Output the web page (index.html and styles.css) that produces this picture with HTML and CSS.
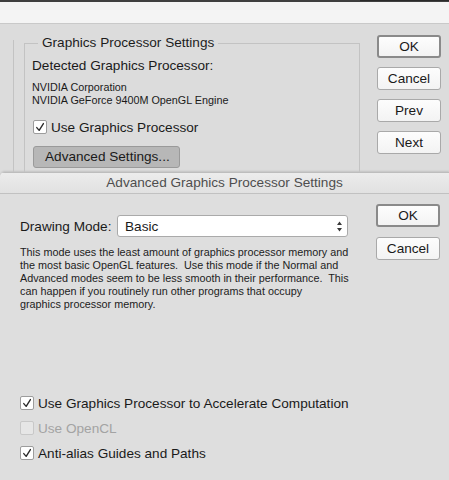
FILE: index.html
```html
<!DOCTYPE html>
<html>
<head>
<meta charset="utf-8">
<link rel="stylesheet" href="styles.css">
</head>
<body>
<div class="topbar">
  <div class="topbar-dark"><div class="topbar-dark-right"></div></div>
  <div class="topbar-light"></div>
</div>
<div class="main">
  <div class="sidebar"></div>
  <fieldset class="group">
    <legend>Graphics Processor Settings</legend>
    <div class="detected">Detected Graphics Processor:</div>
    <div class="gpu-info">NVIDIA Corporation<br>NVIDIA GeForce 9400M OpenGL Engine</div>
    <div class="check-row gp-check">
      <span class="checkbox checked"><svg viewBox="0 0 13 13" width="13" height="13"><path d="M3 6.6 L5.6 9.6 L10.2 2.2" fill="none" stroke="#2b2b2b" stroke-width="1.5" stroke-linecap="round" stroke-linejoin="round"/></svg></span>
      <span class="check-label">Use Graphics Processor</span>
    </div>
    <div class="adv-btn">Advanced Settings...</div>
  </fieldset>
  <div class="buttons main-buttons">
    <div class="btn btn-default">OK</div>
    <div class="btn">Cancel</div>
    <div class="btn">Prev</div>
    <div class="btn">Next</div>
  </div>
</div>
<div class="sheet">
  <div class="sheet-title">Advanced Graphics Processor Settings</div>
  <div class="sheet-body">
    <div class="sheet-main">
      <div class="mode-row">
        <span class="mode-label">Drawing Mode:</span>
        <div class="select">
          <span>Basic</span>
          <svg class="select-arrows" viewBox="0 0 7 11" width="7" height="11"><path d="M3.5 0.5 L6 4 L1 4 Z M1 7 L6 7 L3.5 10.5 Z" fill="#3a3a3a"/></svg>
        </div>
      </div>
      <p class="desc">This mode uses the least amount of graphics processor memory and<br>the most basic OpenGL features.&nbsp; Use this mode if the Normal and<br>Advanced modes seem to be less smooth in their performance.&nbsp; This<br>can happen if you routinely run other programs that occupy<br>graphics processor memory.</p>
      <div class="checks">
        <div class="check-row">
          <span class="checkbox checked"><svg viewBox="0 0 13 13" width="13" height="13"><path d="M3 6.6 L5.6 9.6 L10.2 2.2" fill="none" stroke="#2b2b2b" stroke-width="1.5" stroke-linecap="round" stroke-linejoin="round"/></svg></span>
          <span class="check-label">Use Graphics Processor to Accelerate Computation</span>
        </div>
        <div class="check-row disabled">
          <span class="checkbox"></span>
          <span class="check-label">Use OpenCL</span>
        </div>
        <div class="check-row">
          <span class="checkbox checked"><svg viewBox="0 0 13 13" width="13" height="13"><path d="M3 6.6 L5.6 9.6 L10.2 2.2" fill="none" stroke="#2b2b2b" stroke-width="1.5" stroke-linecap="round" stroke-linejoin="round"/></svg></span>
          <span class="check-label">Anti-alias Guides and Paths</span>
        </div>
      </div>
    </div>
    <div class="buttons sheet-buttons">
      <div class="btn btn-default">OK</div>
      <div class="btn">Cancel</div>
    </div>
  </div>
</div>
</body>
</html>
```

FILE: styles.css
```css
* { box-sizing: border-box; }
html, body {
  margin: 0;
  padding: 0;
  width: 449px;
  height: 480px;
  overflow: hidden;
  background: #dddddd;
  font-family: "Liberation Sans", Arial, sans-serif;
  color: #1a1a1a;
}

.topbar-dark {
  height: 2px;
  background: #3f3f3f;
  display: flex;
  justify-content: flex-end;
}
.topbar-dark-right {
  width: 89px;
  height: 1px;
  background: #2a2a2a;
}
.topbar-light {
  height: 22px;
  background: #f4f4f4;
  border-bottom: 1px solid #c9c9c9;
}

.main {
  height: 148px;
  display: flex;
  align-items: flex-start;
  overflow: hidden;
  background: #dcdcdc;
}
.sidebar {
  width: 14px;
  height: 200px;
  margin-top: 16px;
  border-right: 1px solid #c3c3c3;
}
.group {
  width: 336px;
  height: 200px;
  margin: 11px 0 0 10px;
  padding: 0 0 0 7px;
  border: 1px solid #c3c3c3;
  min-width: 0;
}
.group legend {
  font-size: 13.6px;
  line-height: 16px;
  padding: 0 4px;
  margin-left: 6px;
  color: #1c1c1c;
}
.detected {
  font-size: 13.6px;
  line-height: 16px;
  margin-top: 7px;
}
.gpu-info {
  font-size: 10.8px;
  line-height: 13px;
  margin-top: 7px;
}
.check-row {
  display: flex;
  align-items: center;
  height: 16px;
  font-size: 13.6px;
}
.gp-check {
  margin-top: 12px;
  margin-left: 1px;
}
.checkbox {
  width: 14px;
  height: 14px;
  border: 1px solid #9c9c9c;
  border-radius: 2px;
  background: #ffffff;
  display: flex;
  align-items: center;
  justify-content: center;
  flex: none;
}
.checkbox svg { display: block; }
.check-label {
  margin-left: 4px;
  padding-top: 1px;
}
.adv-btn {
  width: 147px;
  height: 22px;
  margin-top: 11px;
  margin-left: 1px;
  border: 1px solid #9a9a9a;
  border-radius: 3px;
  background: #b7b7b7;
  font-size: 13.6px;
  line-height: 20px;
  padding-left: 11px;
  color: #1a1a1a;
}

.buttons {
  display: flex;
  flex-direction: column;
}
.main-buttons {
  margin-left: 17px;
  padding-top: 11px;
  gap: 9px;
}
.btn {
  width: 64px;
  height: 23px;
  border: 1px solid #a9a9a9;
  border-radius: 3px;
  background: linear-gradient(#fdfdfd, #f3f3f3);
  font-size: 13.6px;
  line-height: 21px;
  text-align: center;
  color: #1a1a1a;
}
.btn-default {
  border: 2px solid #8a8a8a;
  line-height: 19px;
}

.sheet {
  height: 308px;
  background: #dedede;
  border-top-left-radius: 5px;
  overflow: hidden;
  box-shadow: 0 -1px 2px rgba(0,0,0,0.12);
}
.sheet-title {
  height: 22px;
  background: linear-gradient(#ececec, #e1e1e1);
  border-top: 1px solid #bdbdbd;
  border-bottom: 1px solid #c1c1c1;
  text-align: center;
  font-size: 13.6px;
  line-height: 20px;
  color: #4e4e4e;
}
.sheet-body {
  display: flex;
  align-items: flex-start;
  padding: 10px 0 0 20px;
}
.sheet-main {
  width: 356px;
}
.mode-row {
  display: flex;
  align-items: center;
  margin-top: 11px;
  font-size: 13.6px;
}
.mode-label {
  width: 97px;
}
.select {
  width: 231px;
  height: 22px;
  background: #ffffff;
  border: 1px solid #aaaaaa;
  border-radius: 3px;
  display: flex;
  align-items: center;
  justify-content: space-between;
  padding: 0 4px 0 7px;
}
.select-arrows { display: block; }
.desc {
  margin: 9px 0 0 0;
  font-size: 10.8px;
  line-height: 13px;
  color: #1c1c1c;
  white-space: nowrap;
}
.checks {
  margin-top: 84px;
  display: flex;
  flex-direction: column;
  gap: 9px;
}
.disabled .checkbox {
  border-color: #c8c8c8;
  background: #e6e6e6;
}
.disabled .check-label {
  color: #a3a3a3;
}
.sheet-buttons {
  margin-left: 0;
  gap: 10px;
}
```
